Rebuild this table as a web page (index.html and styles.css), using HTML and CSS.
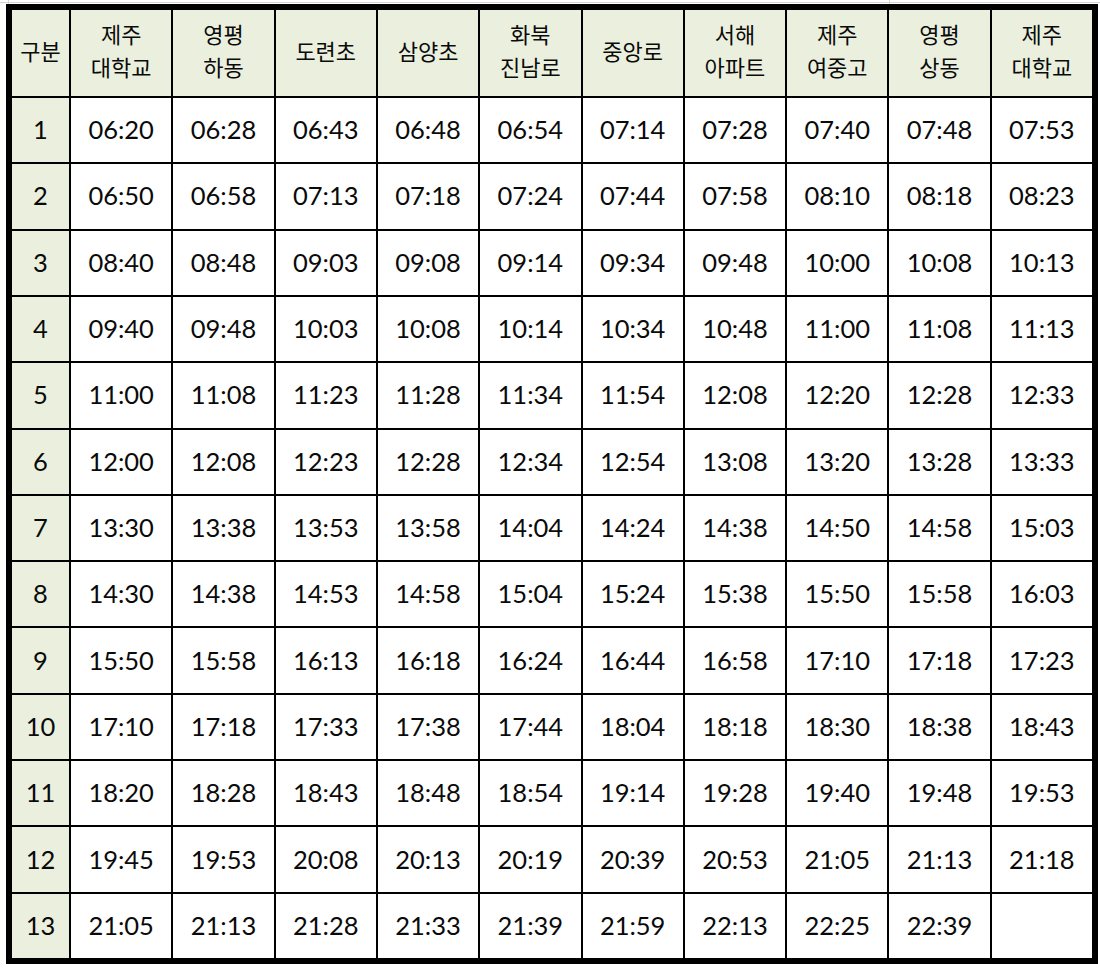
FILE: index.html
```html
<!DOCTYPE html>
<html lang="ko">
<head>
<meta charset="utf-8">
<title>시간표</title>
<link rel="stylesheet" href="styles.css">
</head>
<body>
<div class="sheet">
  <div class="timetable" id="tt">
    <div class="cell head">구분</div>
    <div class="cell head">제주<br>대학교</div>
    <div class="cell head">영평<br>하동</div>
    <div class="cell head">도련초</div>
    <div class="cell head">삼양초</div>
    <div class="cell head">화북<br>진남로</div>
    <div class="cell head">중앙로</div>
    <div class="cell head">서해<br>아파트</div>
    <div class="cell head">제주<br>여중고</div>
    <div class="cell head">영평<br>상동</div>
    <div class="cell head">제주<br>대학교</div>

    <div class="cell num">1</div><div class="cell">06:20</div><div class="cell">06:28</div><div class="cell">06:43</div><div class="cell">06:48</div><div class="cell">06:54</div><div class="cell">07:14</div><div class="cell">07:28</div><div class="cell">07:40</div><div class="cell">07:48</div><div class="cell">07:53</div>
    <div class="cell num">2</div><div class="cell">06:50</div><div class="cell">06:58</div><div class="cell">07:13</div><div class="cell">07:18</div><div class="cell">07:24</div><div class="cell">07:44</div><div class="cell">07:58</div><div class="cell">08:10</div><div class="cell">08:18</div><div class="cell">08:23</div>
    <div class="cell num">3</div><div class="cell">08:40</div><div class="cell">08:48</div><div class="cell">09:03</div><div class="cell">09:08</div><div class="cell">09:14</div><div class="cell">09:34</div><div class="cell">09:48</div><div class="cell">10:00</div><div class="cell">10:08</div><div class="cell">10:13</div>
    <div class="cell num">4</div><div class="cell">09:40</div><div class="cell">09:48</div><div class="cell">10:03</div><div class="cell">10:08</div><div class="cell">10:14</div><div class="cell">10:34</div><div class="cell">10:48</div><div class="cell">11:00</div><div class="cell">11:08</div><div class="cell">11:13</div>
    <div class="cell num">5</div><div class="cell">11:00</div><div class="cell">11:08</div><div class="cell">11:23</div><div class="cell">11:28</div><div class="cell">11:34</div><div class="cell">11:54</div><div class="cell">12:08</div><div class="cell">12:20</div><div class="cell">12:28</div><div class="cell">12:33</div>
    <div class="cell num">6</div><div class="cell">12:00</div><div class="cell">12:08</div><div class="cell">12:23</div><div class="cell">12:28</div><div class="cell">12:34</div><div class="cell">12:54</div><div class="cell">13:08</div><div class="cell">13:20</div><div class="cell">13:28</div><div class="cell">13:33</div>
    <div class="cell num">7</div><div class="cell">13:30</div><div class="cell">13:38</div><div class="cell">13:53</div><div class="cell">13:58</div><div class="cell">14:04</div><div class="cell">14:24</div><div class="cell">14:38</div><div class="cell">14:50</div><div class="cell">14:58</div><div class="cell">15:03</div>
    <div class="cell num">8</div><div class="cell">14:30</div><div class="cell">14:38</div><div class="cell">14:53</div><div class="cell">14:58</div><div class="cell">15:04</div><div class="cell">15:24</div><div class="cell">15:38</div><div class="cell">15:50</div><div class="cell">15:58</div><div class="cell">16:03</div>
    <div class="cell num">9</div><div class="cell">15:50</div><div class="cell">15:58</div><div class="cell">16:13</div><div class="cell">16:18</div><div class="cell">16:24</div><div class="cell">16:44</div><div class="cell">16:58</div><div class="cell">17:10</div><div class="cell">17:18</div><div class="cell">17:23</div>
    <div class="cell num">10</div><div class="cell">17:10</div><div class="cell">17:18</div><div class="cell">17:33</div><div class="cell">17:38</div><div class="cell">17:44</div><div class="cell">18:04</div><div class="cell">18:18</div><div class="cell">18:30</div><div class="cell">18:38</div><div class="cell">18:43</div>
    <div class="cell num">11</div><div class="cell">18:20</div><div class="cell">18:28</div><div class="cell">18:43</div><div class="cell">18:48</div><div class="cell">18:54</div><div class="cell">19:14</div><div class="cell">19:28</div><div class="cell">19:40</div><div class="cell">19:48</div><div class="cell">19:53</div>
    <div class="cell num">12</div><div class="cell">19:45</div><div class="cell">19:53</div><div class="cell">20:08</div><div class="cell">20:13</div><div class="cell">20:19</div><div class="cell">20:39</div><div class="cell">20:53</div><div class="cell">21:05</div><div class="cell">21:13</div><div class="cell">21:18</div>
    <div class="cell num">13</div><div class="cell">21:05</div><div class="cell">21:13</div><div class="cell">21:28</div><div class="cell">21:33</div><div class="cell">21:39</div><div class="cell">21:59</div><div class="cell">22:13</div><div class="cell">22:25</div><div class="cell">22:39</div><div class="cell"></div>
  </div>
</div>
</body>
</html>
```

FILE: styles.css
```css
html, body {
  margin: 0;
  padding: 0;
  background: #ffffff;
}

body {
  width: 1100px;
  height: 970px;
  overflow: hidden;
  font-family: Lato, "Noto Sans CJK KR", sans-serif;
  color: #0a0a0a;
}

.sheet {
  padding: 4px 0 0 6px;
  background:
    linear-gradient(#d4d4d4, #d4d4d4) 0 2px / 100% 1px no-repeat,
    linear-gradient(#d4d4d4, #d4d4d4) 8px 0 / 1px 4px no-repeat,
    linear-gradient(#d4d4d4, #d4d4d4) 889px 0 / 1px 4px no-repeat;
}

.timetable {
  width: 1080px;
  height: 948px;
  border: 6px solid #000000;
  background: #000000;
  display: grid;
  grid-template-columns: 57px repeat(10, 1fr);
  grid-template-rows: 86px repeat(13, 1fr);
  gap: 2px;
}

.cell {
  background: #ffffff;
  display: flex;
  align-items: center;
  justify-content: center;
  text-align: center;
  font-size: 25.5px;
  padding-bottom: 2px;
}

.head {
  background: #ebf0de;
  font-family: "Noto Sans CJK KR", sans-serif;
  font-size: 22px;
  line-height: 33px;
  padding-bottom: 6px;
}

.num {
  background: #ebf0de;
}
```
